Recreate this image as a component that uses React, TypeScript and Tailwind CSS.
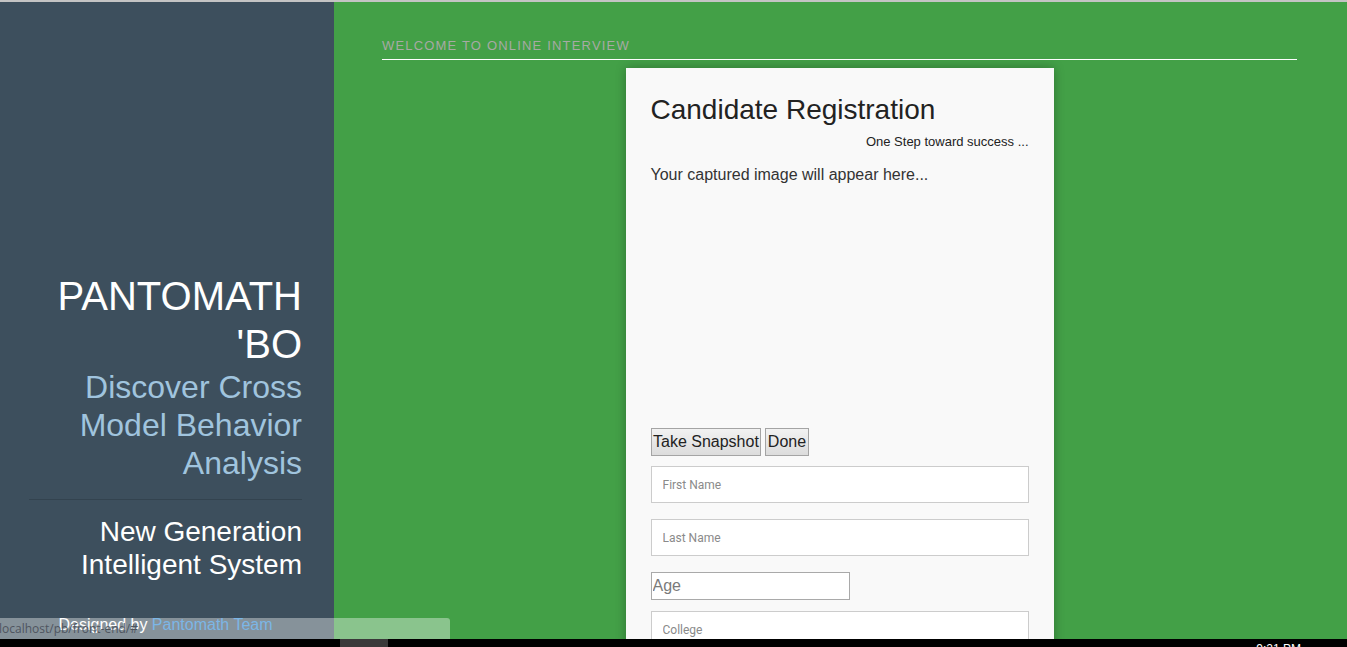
import React from "react";

export default function App() {
  const sans = { fontFamily: '"Liberation Sans", Arial, sans-serif' };
  return (
    <div
      className="relative flex h-[647px] w-full flex-col overflow-hidden bg-[#43a047]"
      style={sans}
    >
      <div className="h-[2px] w-full shrink-0 bg-[#c4c4c4]" />
      <div className="flex min-h-0 flex-1">
        {/* Sidebar */}
        <aside className="flex w-[334px] shrink-0 flex-col bg-[#3d4f5d] pl-[29px] pr-[32px] pt-[270px]">
          <div className="text-right">
            <div className="text-[40px] leading-[48px] text-white">
              PANTOMATH
              <br />
              'BO
            </div>
            <div className="text-[32px] leading-[38.2px] text-[#a0c4de]">
              Discover Cross
              <br />
              Model Behavior
              <br />
              Analysis
            </div>
          </div>
          <hr className="my-[16px] border-0 border-t border-[#33434f]" />
          <div className="-mt-[1px] text-right text-[28px] leading-[33px] text-white">
            New Generation
            <br />
            Intelligent System
          </div>
          <div className="mt-[35px] text-center text-[16px] leading-[18px] text-white">
            Designed by <span className="text-[#2a8ad8]">Pantomath Team</span>
          </div>
        </aside>

        {/* Main */}
        <main className="flex min-w-0 flex-1 flex-col pl-[48px] pr-[50px]">
          <div className="border-b border-white pb-[5px] pt-[36px] text-[13px] leading-[16px] tracking-[1.18px] text-[#a7aaa4]">
            WELCOME TO ONLINE INTERVIEW
          </div>
          <div className="mt-[8px] flex justify-center">
            <div className="flex w-[428px] flex-col bg-[#f9f9f9] px-[25px] pt-[26px] pb-[40px] shadow-[0_0_10px_rgba(0,0,0,0.28)]">
              <h1 className="text-[28px] leading-[32px] text-[#222]">Candidate Registration</h1>
              <div className="mt-[6px] text-right text-[13px] leading-[19px] text-[#222]">
                One Step toward success ...
              </div>
              <div className="mt-[13px] text-[16px] leading-[22px] text-[#333]">
                Your captured image will appear here...
              </div>
              <div className="h-[242px]" />
              <div className="flex h-[28px] gap-[4px]">
                <button className="h-[28px] border border-[#a4a4a4] bg-gradient-to-b from-[#f2f2f2] to-[#dcdcdc] px-[1.5px] text-[16px] leading-[18px] text-[#222]">
                  Take Snapshot
                </button>
                <button className="h-[28px] border border-[#a4a4a4] bg-gradient-to-b from-[#f2f2f2] to-[#dcdcdc] px-[1.5px] text-[16px] leading-[18px] text-[#222]">
                  Done
                </button>
              </div>
              <input
                placeholder="First Name"
                className="mt-[10px] h-[37px] w-full border border-[#cccccc] bg-white px-[11px] text-[12px] outline-none placeholder:text-[#8a8a8a]"
                style={{ fontFamily: 'Roboto, "Liberation Sans", sans-serif' }}
              />
              <input
                placeholder="Last Name"
                className="mt-[16px] h-[37px] w-full border border-[#cccccc] bg-white px-[11px] text-[12px] outline-none placeholder:text-[#8a8a8a]"
                style={{ fontFamily: 'Roboto, "Liberation Sans", sans-serif' }}
              />
              <input
                placeholder="Age"
                className="mt-[16px] h-[28px] w-[199px] border border-[#a9a9a9] bg-white px-[1px] text-[16px] outline-none placeholder:text-[#7a7a7a]"
              />
              <input
                placeholder="College"
                className="mt-[11px] h-[37px] w-full border border-[#cccccc] bg-white px-[11px] text-[12px] outline-none placeholder:text-[#8a8a8a]"
                style={{ fontFamily: 'Roboto, "Liberation Sans", sans-serif' }}
              />
            </div>
          </div>
        </main>
      </div>

      {/* Taskbar strip */}
      <div className="relative z-20 flex h-[8px] shrink-0 overflow-hidden bg-black">
        <div className="ml-[340px] h-full w-[48px] bg-[#3a3a3a]" />
        <div className="ml-auto pr-[46px] pt-[4px] text-[12px] leading-[12px] text-white">
          9:21 PM
        </div>
      </div>

      {/* Status bubble */}
      <div className="absolute bottom-[8px] left-0 z-10 flex h-[21px] w-[450px] items-center rounded-tr-[3px] bg-white/[0.38]">
        <span
          className="-ml-[1px] text-[12px] leading-[14px] text-[#4e5560]"
          style={{ fontFamily: '"Open Sans", "Liberation Sans", sans-serif' }}
        >
          localhost/pb/front-end/#
        </span>
      </div>
    </div>
  );
}
